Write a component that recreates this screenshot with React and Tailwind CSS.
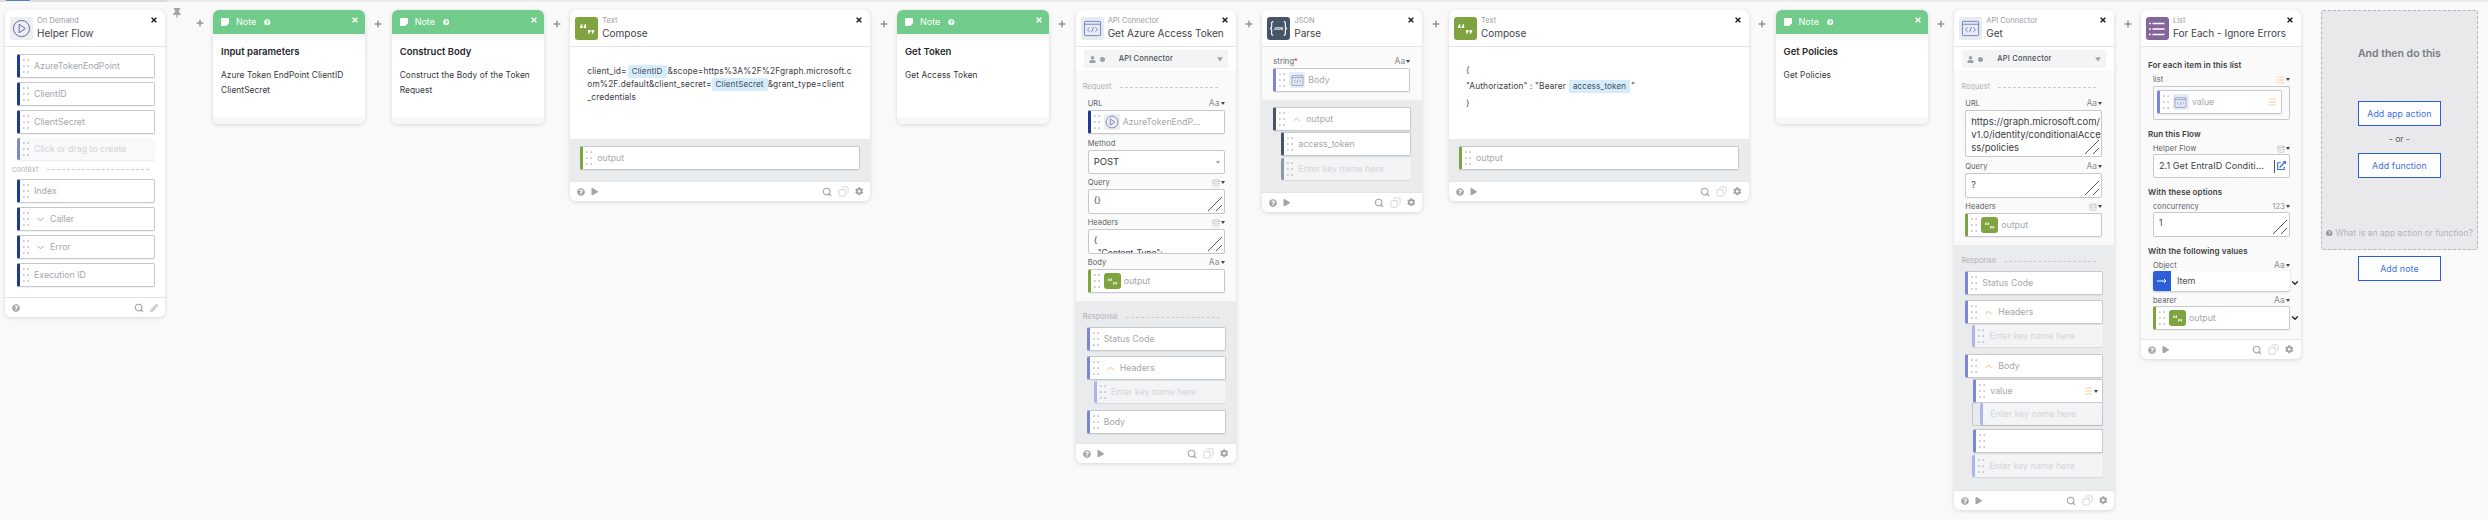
import { ChevronDown, ChevronUp, Copy, Database, List, Search } from 'lucide-react';
import { FaCog, FaExternalLinkAlt, FaPencilAlt, FaPlay, FaPlus, FaQuestionCircle, FaThumbtack, FaTimes, FaUser } from 'react-icons/fa';

function Caret({ className = 'border-t-[#444]' }) {
  return <span className={`ml-[1px] inline-block h-0 w-0 border-x-[2.5px] border-t-[3px] border-x-transparent ${className}`} />;
}

function Grip() {
  return (
    <svg width="7" height="14" viewBox="0 0 7 14" className="shrink-0 fill-[#c2c5c9]">
      {[1, 7, 13].map((y) => (
        <g key={y}>
          <rect x="0" y={y - 0.8} width="1.7" height="1.7" />
          <rect x="4.3" y={y - 0.8} width="1.7" height="1.7" />
        </g>
      ))}
    </svg>
  );
}

function Connector() {
  return (
    <div className="flex h-[27px] w-[26.67px] shrink-0 items-center justify-center">
      <FaPlus className="text-[8px] text-[#8f9398]" />
    </div>
  );
}

// header icons
function FlowIcon({ small }) {
  return (
    <div className={`flex shrink-0 items-center justify-center rounded-[2px] bg-[#eceef0] ${small ? 'h-[16px] w-[16px]' : 'h-[23px] w-[23px]'}`}>
      <svg viewBox="0 0 20 20" className={small ? 'h-[14px] w-[14px]' : 'h-[19px] w-[19px]'} fill="none" stroke="#5c64a8" strokeWidth="1">
        <circle cx="10" cy="10" r="8.5" />
        <path d="M7.5 5.5 14 10l-6.5 4.5z" />
      </svg>
    </div>
  );
}

function QuoteIcon({ small }) {
  return (
    <div className={`flex shrink-0 items-center justify-center rounded-[3px] bg-[#7ea33f] ${small ? 'h-[16px] w-[17px]' : 'h-[23px] w-[23px]'}`}>
      <svg viewBox="0 0 20 20" className={small ? 'h-[13px] w-[13px]' : 'h-[20px] w-[20px]'} fill="#fff">
        <path d="M3 7.5 4.6 5h.9L5 7h.6v2H3zM6.6 7.5 8.2 5h.9l-.5 2h.6v2H6.6z" />
        <path d="M11 11h2.6v1.6L12 15h-.9l.5-2H11zM14.6 11h2.6v1.6L15.6 15h-.9l.5-2h-.6z" />
      </svg>
    </div>
  );
}

function ApiIcon({ small }) {
  return (
    <div className={`flex shrink-0 items-center justify-center rounded-[2px] bg-[#e9ebf2] ${small ? 'h-[16px] w-[16px]' : 'h-[23px] w-[23px]'}`}>
      <svg viewBox="0 0 20 20" className={small ? 'h-[13px] w-[13px]' : 'h-[19px] w-[19px]'} fill="none" stroke="#5f78ba" strokeWidth="0.9">
        <rect x="1.5" y="2.5" width="17" height="15" rx="0.8" />
        <path d="M1.5 5.5h17" />
        <path d="M7 9 4.7 11.2 7 13.4M13 9l2.3 2.2-2.3 2.2M11 8.5l-2 5.5" />
      </svg>
    </div>
  );
}

function JsonIcon() {
  return (
    <div className="flex h-[23px] w-[23px] shrink-0 items-center justify-center rounded-[3px] bg-[#475569]">
      <svg viewBox="0 0 20 20" className="h-[21px] w-[21px]" fill="none" stroke="#fff" strokeWidth="1.1">
        <path d="M5 3.5C3 3.5 3.5 5 3.5 7.5 3.5 9 2.8 10 1.8 10c1 0 1.7 1 1.7 2.5 0 2.5-.5 4 1.5 4" />
        <path d="M15 3.5c2 0 1.5 1.5 1.5 4 0 1.500.7 2.500 1.700 2.500-1 0-1.700 1-1.700 2.500 0 2.500.5 4-1.500 4" />
        <text x="10" y="11" textAnchor="middle" fontSize="3.2" fill="#fff" stroke="none" fontFamily="Inter, sans-serif" fontWeight="700">JSON</text>
      </svg>
    </div>
  );
}

function ListIcon() {
  return (
    <div className="flex h-[23px] w-[23px] shrink-0 items-center justify-center rounded-[3px] bg-[#84669a]">
      <svg viewBox="0 0 20 20" className="h-[20px] w-[20px]" stroke="#fff" strokeWidth="1.3" fill="none">
        <path d="M5.5 4.5h12M5.500 10h12M5.500 15.500h12" />
        <path d="M2 4.500h1.800M2 10h1.800M2 15.500h1.800" />
      </svg>
    </div>
  );
}

function Header({ icon, kind, title }) {
  return (
    <div className="relative flex h-[37px] shrink-0 items-start gap-[4px] border-b border-[#e2e4e7] pl-[5px] pt-[7px]">
      {icon}
      <div className="min-w-0">
        <div className="h-[10px] whitespace-nowrap text-[7.500px] leading-[7px] text-[#9a9ea5]">{kind}</div>
        <div className="whitespace-nowrap text-[10px] leading-[13px] text-[#3f4349]">{title}</div>
      </div>
      <FaTimes className="absolute right-[7px] top-[6px] text-[8px] text-[#222]" />
    </div>
  );
}

function Footer({ edit }) {
  return (
    <div className="flex h-[20px] shrink-0 items-center gap-[5px] rounded-b-[6px] border-t border-[#e2e4e7] bg-white pl-[7px] pr-[7px] text-[#a2a5a9]">
      <FaQuestionCircle className="text-[8px]" />
      {!edit && <FaPlay className="ml-[1px] text-[7.500px]" />}
      <div className="ml-auto flex items-center gap-[6px]">
        <Search size={10} strokeWidth={2.600} />
        {edit ? (
          <FaPencilAlt className="text-[8px] text-[#bdbfc2]" />
        ) : (
          <>
            <Copy size={11} strokeWidth={1.300} className="-scale-x-100 text-[#b9bbbf]" />
            <FaCog className="text-[8.500px]" />
          </>
        )}
      </div>
    </div>
  );
}

function Card({ width, children }) {
  return (
    <div className={`flex shrink-0 flex-col rounded-[6px] bg-white shadow-[0_1px_4px_rgba(0,0,0,0.14)] ${width}`}>
      {children}
    </div>
  );
}

function NoteCard({ width, title, children }) {
  return (
    <Card width={width}>
      <div className="relative flex h-[24px] items-center rounded-t-[6px] bg-[#71cc8b] pl-[8px] text-white">
        <svg viewBox="0 0 10 10" className="h-[8px] w-[8px] fill-white">
          <path d="M0 1q0-1 1-1h8q1 0 1 1v5.500L6.500 10H1q-1 0-1-1z" />
        </svg>
        <span className="ml-[7px] text-[9px]">Note</span>
        <FaQuestionCircle className="ml-[8px] text-[6.500px]" />
        <FaTimes className="absolute right-[6px] top-[6px] text-[8px]" />
      </div>
      <div className="h-[6px] bg-[#f8f8f8]" />
      <div className="h-[77px] px-[8px] pt-[5px] text-[#33363a]">
        <div className="text-[9.500px] font-semibold leading-[13px] text-[#26282c]">{title}</div>
        <div className="mt-[10px] text-[8.300px] leading-[15px] tracking-[0.1px]">{children}</div>
      </div>
      <div className="h-[7px] rounded-b-[6px] bg-[#f8f8f8]" />
    </Card>
  );
}

const NAVY = 'border-l-[#1e3a8a]';
const INDIGO = 'border-l-[#7b86d8]';
const GREEN = 'border-l-[#7ea33f]';
const SLATE = 'border-l-[#475569]';

function Field({ bar = INDIGO, className = '', icon, open, closed, tail, children }) {
  return (
    <div className={`flex h-[24px] items-center rounded-[2px] border border-l-[3px] border-[#c5c8cc] bg-white pl-[3px] text-[8.800px] text-[#a3a7ad] shadow-[0_1px_1px_rgba(0,0,0,0.05)] ${bar} ${className}`}>
      <Grip />
      {icon && <span className="ml-[3px] flex items-center">{icon}</span>}
      {open && <ChevronUp size={11} className="ml-[5px] text-[#f2ae5c]" />}
      {closed && <ChevronDown size={11} className="ml-[5px] text-[#9a9ea5]" />}
      <span className={`truncate ${icon ? 'ml-[3px]' : 'ml-[4px]'}`}>{children}</span>
      {tail && <span className="ml-auto mr-[4px] flex items-center">{tail}</span>}
    </div>
  );
}

function Ghost({ bar = 'border-l-[#aeb5e6]', className = 'bg-[#f3f4f5]', grip = true, children = 'Enter key name here' }) {
  return (
    <div className={`flex h-[22px] items-center rounded-[2px] border-l-[3px] pl-[3px] text-[8.800px] text-[#d2d5d9] shadow-[0_1px_1px_rgba(0,0,0,0.08)] ${bar} ${className}`}>
      {grip && <Grip />}
      <span className="ml-[4px] truncate">{children}</span>
    </div>
  );
}

function Section({ label, className = '' }) {
  return (
    <div className={`flex items-center gap-[8px] text-[7.500px] leading-[10px] text-[#b0b3b8] ${className}`}>
      {label}
      <div className="flex-1 border-t border-dashed border-[#c8cbcf]" />
    </div>
  );
}

function Aa() {
  return (
    <span className="flex items-center text-[8.500px] text-[#8a8e94]">
      Aa
      <Caret />
    </span>
  );
}

function Db() {
  return (
    <span className="flex items-center text-[#8a8e94]">
      <Database size={8} strokeWidth={1.200} />
      <Caret />
    </span>
  );
}

function Bars() {
  return <List size={10} strokeWidth={1.400} className="text-[#f2ae5c]" />;
}

function Num() {
  return (
    <span className="flex items-center text-[7.500px] text-[#8a8e94]">
      123
      <Caret />
    </span>
  );
}

function Label({ right, children, className = '' }) {
  return (
    <div className={`flex h-[11px] items-center justify-between text-[7.500px] tracking-[0.1px] text-[#5b5f66] ${className}`}>
      <span>{children}</span>
      {right}
    </div>
  );
}

function Resize() {
  return (
    <svg width="16" height="16" viewBox="0 0 16 16" className="absolute bottom-[1px] right-[1px]" stroke="#555" strokeWidth="1" fill="none">
      <path d="M1 15 15 1M9 15l6-6" />
    </svg>
  );
}

function Area({ className = '', children }) {
  return (
    <div className={`relative h-[25px] overflow-hidden rounded-[2px] border border-[#c5c8cc] bg-white pl-[5px] pt-[4px] text-[8.500px] leading-[13px] text-[#3a3d42] ${className}`}>
      {children}
      <Resize />
    </div>
  );
}

function ConnectorPick() {
  return (
    <div className="mx-[8px] mb-[2px] mt-[3px] flex h-[18px] items-center rounded-[2px] bg-[#f3f4f6] pl-[5px] text-[#9a9ea5]">
      <FaUser className="text-[7px]" />
      <span className="ml-[4px] h-[5px] w-[5px] rounded-full bg-[#9a9ea5]" />
      <span className="ml-[14px] text-[7.500px] font-medium tracking-[0.2px] text-[#4b4f55]">API Connector</span>
      <Caret className="ml-auto mr-[6px] scale-150 border-t-[#a5a8ad]" />
    </div>
  );
}

function Chip({ children, className = '' }) {
  return <span className={`inline-block h-[13px] rounded-[1px] bg-[#d5ecfa] px-[4px] text-[8px] leading-[12px] text-[#3d4b57] ${className}`}>{children}</span>;
}

function Compose({ children }) {
  return (
    <Card width="w-[300px]">
      <Header icon={<QuoteIcon />} kind="Text" title="Compose" />
      <div className="h-[92px] px-[17px] pt-[18px] text-[8.300px] tracking-[0.15px] text-[#3a3d42]">{children}</div>
      <div className="h-[42px] bg-[#e9ebed] px-[10px] pt-[7px]">
        <Field bar={GREEN}>output</Field>
      </div>
      <Footer />
    </Card>
  );
}

function HelperFlow() {
  const inputs = ['AzureTokenEndPoint', 'ClientID', 'ClientSecret'];
  return (
    <Card width="w-[160px]">
      <Header icon={<FlowIcon />} kind="On Demand" title="Helper Flow" />
      <div className="flex flex-col pb-[10px] pt-[7px]">
        <div className="flex flex-col gap-[4px] pl-[12px] pr-[10px]">
          {inputs.map((name) => (
            <Field key={name} bar={NAVY}>{name}</Field>
          ))}
          <Ghost bar="border-l-[#7f8bb8]" className="bg-[#f9f9fa]">Click or drag to create</Ghost>
        </div>
        <Section label="context" className="my-[4px] h-[11px] pl-[7px] pr-[16px]" />
        <div className="flex flex-col gap-[4px] pl-[12px] pr-[10px]">
          <Field bar={NAVY}>Index</Field>
          <Field bar={NAVY} closed>Caller</Field>
          <Field bar={NAVY} closed>Error</Field>
          <Field bar={NAVY}>Execution ID</Field>
        </div>
      </div>
      <Footer edit />
    </Card>
  );
}

function AzureToken() {
  return (
    <Card width="w-[160px]">
      <Header icon={<ApiIcon />} kind="API Connector" title="Get Azure Access Token" />
      <ConnectorPick />
      <div className="h-[231px] bg-[#fafafa] pl-[12px] pr-[11px] pt-[12px]">
        <Section label="Request" className="-ml-[5px] mr-[7px]" />
        <Label right={<Aa />} className="mt-[6px]">URL</Label>
        <Field bar={NAVY} className="mt-[1px]" icon={<FlowIcon small />}>AzureTokenEndP...</Field>
        <Label className="mt-[4px]">Method</Label>
        <div className="mt-[1px] flex h-[24px] items-center rounded-[2px] border border-[#c5c8cc] bg-white pl-[5px] text-[9.500px] text-[#33363a]">
          POST
          <Caret className="ml-auto mr-[4px] border-t-[#9a9ea5]" />
        </div>
        <Label right={<Db />} className="mt-[3px]">Query</Label>
        <Area className="mt-[1px]">{'{}'}</Area>
        <Label right={<Db />} className="mt-[3px]">Headers</Label>
        <Area className="mt-[1px]">
          {'{'}
          <div className="pl-[4px]">"Content-Type":</div>
        </Area>
        <Label right={<Aa />} className="mt-[3px]">Body</Label>
        <Field bar={GREEN} className="mt-[1px]" icon={<QuoteIcon small />}>output</Field>
      </div>
      <div className="h-[142px] bg-[#e9ebed] pl-[11px] pr-[10px] pt-[11px]">
        <Section label="Response" className="-ml-[4px] mr-[6px]" />
        <Field className="mt-[5px]">Status Code</Field>
        <Field className="mt-[5px]" open>Headers</Field>
        <Ghost className="ml-[7px] mt-[1px] bg-[#f3f4f5]" />
        <Field className="mt-[7px]">Body</Field>
      </div>
      <Footer />
    </Card>
  );
}

function Parse() {
  return (
    <Card width="w-[160px]">
      <Header icon={<JsonIcon />} kind="JSON" title="Parse" />
      <div className="h-[53px] bg-[#fafafa] pl-[11px] pr-[12px] pt-[9px]">
        <Label right={<Aa />}>
          string<span className="text-[#e11d1d]">*</span>
        </Label>
        <Field className="mt-[1px]" icon={<ApiIcon small />}>Body</Field>
      </div>
      <div className="flex h-[92px] flex-col bg-[#e9ebed] pl-[11px] pr-[11px] pt-[7px]">
        <Field bar={SLATE} open>output</Field>
        <Field bar={SLATE} className="ml-[8px] mt-[1px]">access_token</Field>
        <Ghost bar="border-l-[#8f98a6]" className="ml-[8px] mt-[2px] bg-[#f3f4f5]" />
      </div>
      <Footer />
    </Card>
  );
}

function GetPolicies() {
  return (
    <Card width="w-[160px]">
      <Header icon={<ApiIcon />} kind="API Connector" title="Get" />
      <ConnectorPick />
      <div className="h-[175px] bg-[#fafafa] pl-[11px] pr-[12px] pt-[12px]">
        <Section label="Request" className="-ml-[4px] mr-[6px]" />
        <Label right={<Aa />} className="mt-[6px]">URL</Label>
        <Area className="mt-[1px] !h-[47px] pt-[2px] text-[9.500px]">
          <div className="whitespace-nowrap">https://graph.microsoft.com/</div>
          <div className="whitespace-nowrap">v1.0/identity/conditionalAcce</div>
          <div className="whitespace-nowrap">ss/policies</div>
        </Area>
        <Label right={<Aa />} className="mt-[4px]">Query</Label>
        <Area className="mt-[1px] text-[9px]">?</Area>
        <Label right={<Db />} className="mt-[3px]">Headers</Label>
        <Field bar={GREEN} className="mt-[1px]" icon={<QuoteIcon small />}>output</Field>
      </div>
      <div className="h-[245px] bg-[#e9ebed] pl-[11px] pr-[11px] pt-[11px]">
        <Section label="Response" className="-ml-[4px] mr-[7px]" />
        <Field className="mt-[5px]">Status Code</Field>
        <Field className="mt-[5px]" open>Headers</Field>
        <Ghost className="ml-[7px] mt-[1px] bg-[#f3f4f5]" />
        <Field className="mt-[7px]" open>Body</Field>
        <Field
          className="ml-[8px] mt-[1px]"
          tail={
            <>
              <Bars />
              <Caret />
            </>
          }
        >
          value
        </Field>
        <div className="ml-[7px] rounded-b-[2px] border-x border-b border-[#c5c8cc] pl-[7px]">
          <Ghost grip={false} className="bg-[#f3f4f5]" />
        </div>
        <Field className="ml-[8px] mt-[3px]"> </Field>
        <Ghost className="ml-[7px] mt-[2px] bg-[#f3f4f5]" />
      </div>
      <Footer />
    </Card>
  );
}

function Heading({ children, className = '' }) {
  return <div className={`text-[8px] font-semibold leading-[11px] tracking-[0.1px] text-[#3a3d42] ${className}`}>{children}</div>;
}

function ForEach() {
  return (
    <Card width="w-[160px]">
      <Header icon={<ListIcon />} kind="List" title="For Each - Ignore Errors" />
      <div className="h-[292px] bg-[#fafafa] pl-[7px] pr-[11px] pt-[13px]">
        <Heading>For each item in this list</Heading>
        <div className="pl-[5px]">
          <Label className="mt-[3px]" right={<span className="flex items-center"><Bars /><Caret /></span>}>list</Label>
          <div className="mt-[1px] h-[34px] rounded-[2px] border border-[#c5c8cc] pl-[3px] pr-[7px] pt-[3px]">
            <Field icon={<ApiIcon small />} tail={<Bars />}>value</Field>
          </div>
        </div>
        <Heading className="mt-[9px]">Run this Flow</Heading>
        <div className="pl-[5px]">
          <Label className="mt-[3px]" right={<Db />}>Helper Flow</Label>
          <div className="flex h-[24px] items-center rounded-[2px] border border-[#c5c8cc] bg-white pl-[5px] text-[9px] tracking-[0.1px] text-[#3a3d42]">
            <span className="whitespace-nowrap">2.1 Get EntraID Conditi...</span>
            <span className="ml-auto mr-[3px] h-[13px] border-l border-[#555] pl-[2px]">
              <FaExternalLinkAlt className="mt-[1px] text-[9px] text-[#3b76e0]" />
            </span>
          </div>
        </div>
        <Heading className="mt-[9px]">With these options</Heading>
        <div className="pl-[5px]">
          <Label className="mt-[3px]" right={<Num />}>concurrency</Label>
          <Area>1</Area>
        </div>
        <Heading className="mt-[9px]">With the following values</Heading>
        <div className="pl-[5px]">
          <Label className="mt-[3px]" right={<Aa />}>Object</Label>
          <div className="relative flex h-[20px] items-center rounded-[2px] bg-white text-[9px] text-[#4b4f55] shadow-[0_1px_2px_rgba(0,0,0,0.22)]">
            <div className="flex h-full w-[18px] items-center justify-center rounded-l-[2px] bg-[#2b5fd9] text-white">
              <svg width="10" height="6" viewBox="0 0 10 6" fill="none" stroke="#fff" strokeWidth="1"><path d="M0 3h9M7 1l2 2-2 2" /></svg>
            </div>
            <span className="ml-[6px]">Item</span>
            <ChevronDown size={10} strokeWidth={3} className="absolute -right-[10px] top-[7px] text-[#222]" />
          </div>
          <Label className="mt-[4px]" right={<Aa />}>bearer</Label>
          <div className="relative">
            <Field bar={GREEN} icon={<QuoteIcon small />}>output</Field>
            <ChevronDown size={10} strokeWidth={3} className="absolute -right-[10px] top-[7px] text-[#222]" />
          </div>
        </div>
      </div>
      <Footer />
    </Card>
  );
}

function AddButton({ className = '', children }) {
  return (
    <button type="button" className={`flex h-[25px] w-[83px] items-center justify-center border border-[#2b5fd9] bg-white text-[8.800px] tracking-[0.1px] text-[#3b6fe0] ${className}`}>
      {children}
    </button>
  );
}

function NextStep() {
  return (
    <div className="ml-[20px] flex w-[157px] shrink-0 flex-col items-center">
      <div className="flex h-[240px] w-full flex-col items-center rounded-[2px] border border-dashed border-[#b5b7bb] bg-[#e9e9ec] pt-[36px]">
        <div className="text-[10.500px] font-semibold leading-[13px] text-[#777b82]">And then do this</div>
        <AddButton className="mt-[41px]">Add app action</AddButton>
        <div className="my-[7px] text-[8.500px] leading-[13px] text-[#555a60]">- or -</div>
        <AddButton>Add function</AddButton>
        <div className="mt-[49px] flex items-center gap-[3px] whitespace-nowrap text-[8.300px] tracking-[0.1px] text-[#b0b3b8]">
          <FaQuestionCircle className="text-[6.500px] text-[#8f9398]" />
          What is an app action or function?
        </div>
      </div>
      <AddButton className="mt-[6px]">Add note</AddButton>
    </div>
  );
}

export default function App() {
  return (
    <div className="h-[520px] w-[2488px] overflow-hidden bg-[#f9f9f9] font-['Inter',sans-serif]">
      <div className="flex h-[3px]">
        <div className="h-[2px] w-[6px] bg-[#dcdde0]" />
        <div className="h-[1px] w-[24px] bg-[#5b7bd8]" />
        <div className="h-[2px] w-[137px] bg-[#dcdde0]" />
        <div className="h-[2px] flex-1 bg-[#ececec]" />
      </div>
      <div className="flex items-start pl-[5px] pt-[7px]">
        <HelperFlow />
        <div className="flex h-[27px] w-[48px] shrink-0 items-start pl-[7px] pt-0">
          <FaThumbtack className="-mt-[2px] text-[10px] text-[#a2a5a9]" />
          <FaPlus className="ml-[14px] mt-[9px] text-[8px] text-[#8f9398]" />
        </div>
        <NoteCard width="w-[152px]" title="Input parameters">
          Azure Token EndPoint ClientID ClientSecret
        </NoteCard>
        <Connector />
        <NoteCard width="w-[152px]" title="Construct Body">
          Construct the Body of the Token Request
        </NoteCard>
        <Connector />
        <Compose>
          <div className="flex h-[13px] items-center">
            client_id=<Chip className="mx-[1px]">ClientID</Chip>&amp;scope=https%3A%2F%2Fgraph.microsoft.c
          </div>
          <div className="flex h-[13px] items-center">
            om%2F.default&amp;client_secret=<Chip>ClientSecret</Chip>&amp;grant_type=client
          </div>
          <div className="h-[12px]">_credentials</div>
        </Compose>
        <Connector />
        <NoteCard width="w-[152px]" title="Get Token">Get Access Token</NoteCard>
        <Connector />
        <AzureToken />
        <Connector />
        <Parse />
        <Connector />
        <Compose>
          <div className="-mt-[3px] h-[16px] leading-[16px]">{'{'}</div>
          <div className="flex h-[17px] items-center">
            "Authorization" : "Bearer<Chip className="ml-[3px] mr-[1px]">access_token</Chip>"
          </div>
          <div className="h-[16px] leading-[16px]">{'}'}</div>
        </Compose>
        <Connector />
        <NoteCard width="w-[152px]" title="Get Policies">Get Policies</NoteCard>
        <Connector />
        <GetPolicies />
        <Connector />
        <ForEach />
        <NextStep />
      </div>
    </div>
  );
}
